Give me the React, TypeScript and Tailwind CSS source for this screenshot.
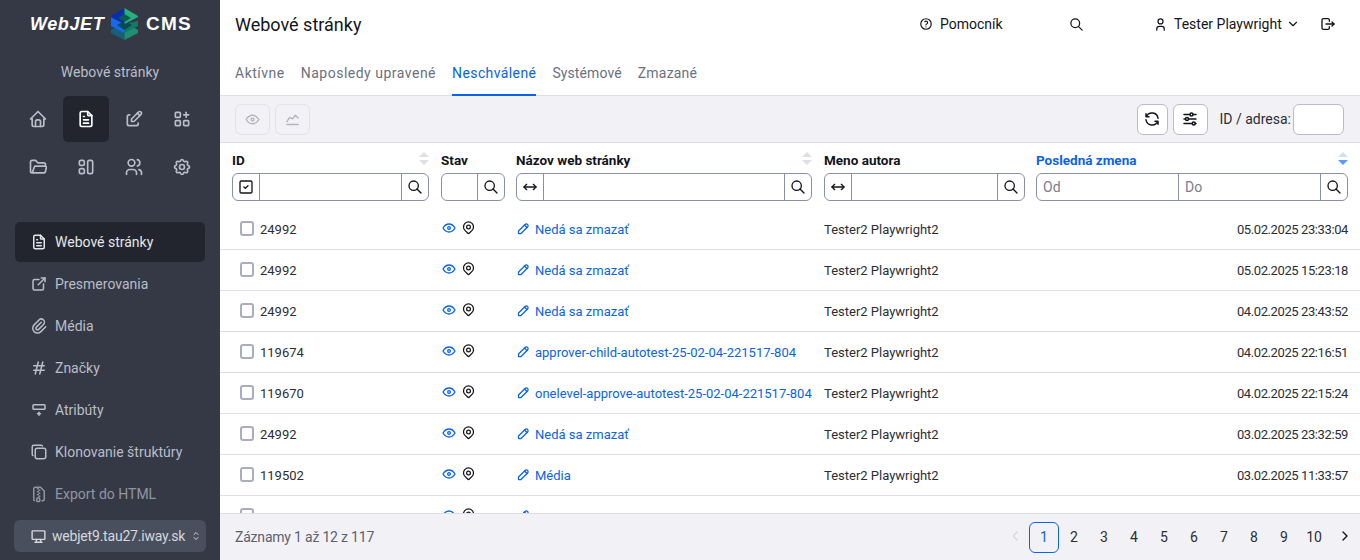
import type { ReactNode } from "react";
import {
  TbAdjustmentsHorizontal, TbApps, TbArrowsHorizontal, TbChartLine, TbChevronDown, TbChevronLeft, TbChevronRight,
  TbCopy, TbDeviceDesktop, TbEdit, TbExternalLink, TbEye, TbFileText, TbFileZip, TbFolderOpen, TbHash, TbHelp, TbHome,
  TbLogout, TbMapPin, TbPaperclip, TbPencil, TbRefresh, TbRowInsertBottom, TbSearch, TbSelector, TbSettings,
  TbSquareCheck, TbUser, TbUsers,
} from "react-icons/tb";

const font = "font-['Roboto',sans-serif]";

function ColumnsIcon() {
  return (
    <svg width="20" height="20" viewBox="0 0 24 24" fill="none" stroke="currentColor" strokeWidth="2" strokeLinejoin="round">
      <rect x="4" y="4" width="6" height="6" rx="2" />
      <rect x="4" y="14" width="6" height="6" rx="2" />
      <rect x="14" y="4" width="6" height="16" rx="2" />
    </svg>
  );
}

function Cube() {
  return (
    <svg width="27" height="32" viewBox="0 0 27 32">
      {/* bottom layer */}
      <path d="M0 22 L13.5 14 L13.5 32 L0 25Z" fill="#16607a" />
      <path d="M13.5 14 L27 22 L27 25 L13.5 32Z" fill="#1f8f72" />
      {/* middle layer */}
      <path d="M0 9 L13.5 16 L13.5 25 L0 18Z" fill="#1668ee" />
      <path d="M13.5 16 L27 13 L27 18 L13.5 25Z" fill="#0f7a68" />
      <path d="M6 17 L13.5 13 L21 17 L13.5 22Z" fill="#0a4a50" />
      {/* top layer */}
      <path d="M0 8 L13.5 0 L13.5 16 L0 9Z" fill="#0a2db0" />
      <path d="M13.5 0 L27 8 L27 9 L13.5 16Z" fill="#23b27c" />
      <path d="M7 10 L13.5 6 L20 10 L13.5 14Z" fill="#0a5a52" />
    </svg>
  );
}

function Logo() {
  return (
    <div className="h-[48px] flex items-center pl-[30px] text-white font-['Liberation_Sans',sans-serif] font-bold">
      <span className="italic w-[81px] text-[18px] tracking-[0.6px] whitespace-nowrap">WebJET</span>
      <Cube />
      <span className="ml-[8px] text-[19px] tracking-[1.2px]">CMS</span>
    </div>
  );
}

const gridIcons: { icon: ReactNode; active?: boolean }[] = [
  { icon: <TbHome size={20} /> },
  { icon: <TbFileText size={20} />, active: true },
  { icon: <TbEdit size={20} /> },
  { icon: <TbApps size={20} /> },
  { icon: <TbFolderOpen size={20} /> },
  { icon: <ColumnsIcon /> },
  { icon: <TbUsers size={20} /> },
  { icon: <TbSettings size={20} /> },
];

const menu: { label: string; icon: ReactNode; active?: boolean; dim?: boolean }[] = [
  { label: "Webové stránky", icon: <TbFileText size={18} />, active: true },
  { label: "Presmerovania", icon: <TbExternalLink size={18} /> },
  { label: "Média", icon: <TbPaperclip size={18} /> },
  { label: "Značky", icon: <TbHash size={18} /> },
  { label: "Atribúty", icon: <TbRowInsertBottom size={18} /> },
  { label: "Klonovanie štruktúry", icon: <TbCopy size={18} /> },
  { label: "Export do HTML", icon: <TbFileZip size={18} />, dim: true },
];

function Sidebar() {
  return (
    <aside className="w-[220px] shrink-0 bg-[#353945] flex flex-col text-[#b9bdc8]">
      <Logo />
      <div className="mt-[12px] text-center text-[14px] leading-[24px]">Webové stránky</div>
      <div className="mt-[11px] px-[14px] grid grid-cols-[repeat(4,48px)] auto-rows-[48px]">
        {gridIcons.map((g, i) => (
          <div key={i} className="flex items-center justify-center">
            <div className={`w-[46px] h-[46px] rounded-[5px] flex items-center justify-center ${g.active ? "bg-[#22252e] text-white" : ""}`}>
              {g.icon}
            </div>
          </div>
        ))}
      </div>
      <nav className="mt-[31px] px-[15px] flex flex-col gap-[2px]">
        {menu.map((m) => (
          <div
            key={m.label}
            className={`h-[40px] rounded-[5px] pl-[15px] flex items-center gap-[7px] text-[14px] ${m.active ? "bg-[#22252e] text-[#e4e6ea]" : ""} ${m.dim ? "opacity-70" : ""}`}
          >
            {m.icon}
            <span>{m.label}</span>
          </div>
        ))}
      </nav>
      <div className="mt-[6px] mx-[14px] h-[32px] rounded-[6px] bg-[#4a4f5d] pl-[16px] pr-[4px] flex items-center text-[14px] tracking-[-0.2px] text-[#d5d7dd]">
        <TbDeviceDesktop size={17} />
        <span className="ml-[5px] flex-1 whitespace-nowrap">webjet9.tau27.iway.sk</span>
        <TbSelector size={12} />
      </div>
    </aside>
  );
}

function Header() {
  return (
    <header className="h-[48px] shrink-0 pl-[15px] pr-[24px] flex items-center text-[#13151b]">
      <h1 className="text-[18px] flex-1">Webové stránky</h1>
      <div className="flex items-center gap-[7px] text-[14px] w-[150px]">
        <TbHelp size={14} />
        <span>Pomocník</span>
      </div>
      <div className="w-[84px]">
        <TbSearch size={15} />
      </div>
      <div className="flex items-center gap-[6px] text-[14px] w-[167px]">
        <TbUser size={15} />
        <span>Tester Playwright</span>
        <TbChevronDown size={14} className="-ml-[2px]" />
      </div>
      <TbLogout size={16} />
    </header>
  );
}

const tabs = [
  { label: "Aktívne", spacing: "tracking-[0.5px]" },
  { label: "Naposledy upravené", spacing: "tracking-[0.5px]" },
  { label: "Neschválené", spacing: "tracking-[0.4px]" },
  { label: "Systémové", spacing: "tracking-[0.1px]" },
  { label: "Zmazané", spacing: "tracking-[0.2px]" },
];

function Tabs() {
  return (
    <div className="h-[48px] shrink-0 border-b border-[#dddfe8] pl-[15px] flex gap-[16px] text-[14px] text-[#6b7080]">
      {tabs.map((t) => (
        <div
          key={t.label}
          className={`pt-[14px] leading-[22px] ${t.spacing} ${t.label === "Neschválené" ? "text-[#0a63e8] border-b-2 border-[#0a63e8] h-[48px]" : ""}`}
        >
          {t.label}
        </div>
      ))}
    </div>
  );
}

function Toolbar() {
  return (
    <div className="h-[47px] shrink-0 bg-[#f2f2f6] border-b border-[#dddfe8] pl-[15px] pr-[16px] flex items-center gap-[5px]">
      <div className="w-[35px] h-[31px] rounded-[6px] border border-[#e2e3ea] flex items-center justify-center text-[#b4b6be]">
        <TbEye size={17} />
      </div>
      <div className="w-[35px] h-[31px] rounded-[6px] border border-[#e2e3ea] flex items-center justify-center text-[#b4b6be]">
        <TbChartLine size={17} />
      </div>
      <div className="flex-1" />
      <div className="w-[31px] h-[31px] rounded-[6px] border border-[#b9bccb] bg-white flex items-center justify-center text-[#13151b]">
        <TbRefresh size={18} />
      </div>
      <div className="w-[35px] h-[31px] rounded-[6px] border border-[#b9bccb] bg-white flex items-center justify-center text-[#13151b] mr-[7px]">
        <TbAdjustmentsHorizontal size={18} />
      </div>
      <span className="text-[14px] text-[#2b2e36]">ID / adresa:</span>
      <div className="w-[51px] h-[31px] -ml-[3px] rounded-[6px] border border-[#b9bccb] bg-white" />
    </div>
  );
}

function SortArrows({ active }: { active?: boolean }) {
  return (
    <div className="flex flex-col gap-[3px] -mt-[4px]">
      <div className={`w-0 h-0 border-x-[5px] border-x-transparent border-b-[5px] ${active ? "border-b-[#cfe0fb]" : "border-b-[#dfe0e6]"}`} />
      <div className={`w-0 h-0 border-x-[5px] border-x-transparent border-t-[5px] ${active ? "border-t-[#5b9bf5]" : "border-t-[#dfe0e6]"}`} />
    </div>
  );
}

const inputBox = "h-[28px] flex border border-[#8b90a8] rounded-[6px] overflow-hidden bg-white";
const cols = "grid grid-cols-[209px_75px_308px_212px_312px] px-[12px]";

function SearchCell() {
  return (
    <div className="w-[27px] shrink-0 border-l border-[#8b90a8] flex items-center justify-center text-[#13151b]">
      <TbSearch size={16} />
    </div>
  );
}

function FilterBox({ lead, width }: { lead?: ReactNode; width: string }) {
  return (
    <div className={`${inputBox} ${width}`}>
      {lead && <div className="w-[27px] shrink-0 border-r border-[#8b90a8] flex items-center justify-center text-[#13151b]">{lead}</div>}
      <div className="flex-1" />
      <SearchCell />
    </div>
  );
}

function HeaderTitle({ title, sort, width, active }: { title: string; sort?: boolean; width: string; active?: boolean }) {
  return (
    <div className={`h-[27px] pt-[2px] flex items-center justify-between ${width}`}>
      <span className={`text-[13.5px] font-bold ${active ? "text-[#0a63e8]" : "text-[#13151b]"}`}>{title}</span>
      {sort && <SortArrows active={active} />}
    </div>
  );
}

function TableHead() {
  return (
    <div className={`${cols} h-[66px] shrink-0 pt-[3px]`}>
      <div>
        <HeaderTitle title="ID" sort width="w-[197px]" />
        <FilterBox lead={<TbSquareCheck size={16} />} width="w-[197px]" />
      </div>
      <div>
        <HeaderTitle title="Stav" width="w-[64px]" />
        <FilterBox width="w-[64px]" />
      </div>
      <div>
        <HeaderTitle title="Názov web stránky" sort width="w-[296px]" />
        <FilterBox lead={<TbArrowsHorizontal size={16} />} width="w-[296px]" />
      </div>
      <div>
        <HeaderTitle title="Meno autora" width="w-[201px]" />
        <FilterBox lead={<TbArrowsHorizontal size={16} />} width="w-[201px]" />
      </div>
      <div>
        <HeaderTitle title="Posledná zmena" sort active width="w-[312px]" />
        <div className={`${inputBox} w-[312px] text-[14px] text-[#7a7e8c] leading-[26px]`}>
          <div className="flex-1 pl-[6px]">Od</div>
          <div className="flex-1 pl-[6px] border-l border-[#8b90a8]">Do</div>
          <SearchCell />
        </div>
      </div>
    </div>
  );
}

const author = "Tester2 Playwright2";

// the last row sits behind the footer, only the tops of its icons show
const rows = [
  { id: "24992", title: "Nedá sa zmazať", author, date: "05.02.2025 23:33:04" },
  { id: "24992", title: "Nedá sa zmazať", author, date: "05.02.2025 15:23:18" },
  { id: "24992", title: "Nedá sa zmazať", author, date: "04.02.2025 23:43:52" },
  { id: "119674", title: "approver-child-autotest-25-02-04-221517-804", author, date: "04.02.2025 22:16:51" },
  { id: "119670", title: "onelevel-approve-autotest-25-02-04-221517-804", author, date: "04.02.2025 22:15:24" },
  { id: "24992", title: "Nedá sa zmazať", author, date: "03.02.2025 23:32:59" },
  { id: "119502", title: "Média", author, date: "03.02.2025 11:33:57" },
  { id: "", title: "", author: "", date: "" },
];

function Row({ id, title, author, date }: { id: string; title: string; author: string; date: string }) {
  return (
    <div className={`${cols} h-[41px] shrink-0 border-b border-[#dddfe8] items-center text-[13px] text-[#2b2e36]`}>
      <div className="flex items-center pl-[8px] gap-[6px]">
        <div className="w-[14px] h-[15px] rounded-[3px] border-2 border-[#a9adc0] bg-white -mt-[2px]" />
        <span className="mt-[2px]">{id}</span>
      </div>
      <div className="flex items-center gap-[4px] -mt-[3px] text-[#13151b]">
        <TbEye size={16} className="text-[#0a63e8]" />
        <TbMapPin size={15} />
      </div>
      <div className="flex items-center gap-[4px] text-[#0a63e8] whitespace-nowrap">
        <TbPencil size={15} className="-mt-[2px]" />
        <span className="mt-[2px]">{title}</span>
      </div>
      <div className="mt-[2px]">{author}</div>
      <div className="mt-[2px] text-right tracking-[-0.4px]">{date}</div>
    </div>
  );
}

const pages = ["1", "2", "3", "4", "5", "6", "7", "8", "9", "10"];

function Footer() {
  return (
    <footer className="h-[47px] shrink-0 bg-[#f2f2f6] border-t border-[#dddfe8] pl-[15px] pr-[7px] flex items-center text-[14px]">
      <span className="flex-1 text-[#5c6070] tracking-[-0.2px]">Záznamy 1 až 12 z 117</span>
      <TbChevronLeft size={16} className="text-[#d5d6dc] mr-[6px] -mt-[3px]" />
      {pages.map((p) => (
        <div
          key={p}
          className={`w-[30px] h-[31px] flex items-center justify-center rounded-[6px] ${p === "1" ? "border border-[#0a63e8] text-[#0a63e8]" : "text-[#2b2e36]"}`}
        >
          {p}
        </div>
      ))}
      <TbChevronRight size={16} className="text-[#13151b] ml-[8px] -mt-[3px]" />
    </footer>
  );
}

export default function App() {
  return (
    <div className={`${font} w-[1360px] h-[560px] flex overflow-hidden bg-white`}>
      <Sidebar />
      <main className="flex-1 min-w-0 flex flex-col">
        <Header />
        <Tabs />
        <Toolbar />
        <TableHead />
        <div className="flex-1 min-h-0 overflow-hidden flex flex-col">
          {rows.map((r, i) => (
            <Row key={i} {...r} />
          ))}
        </div>
        <Footer />
      </main>
    </div>
  );
}
